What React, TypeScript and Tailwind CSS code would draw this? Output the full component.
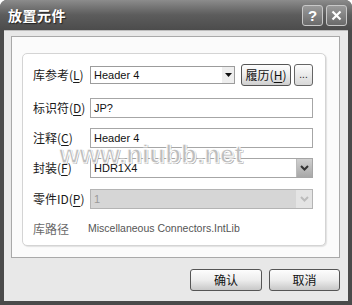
import React from "react";

const cjk = { fontFamily: '"SimSun","Noto Sans CJK SC","Liberation Sans",sans-serif' };
const lat = { fontFamily: '"Liberation Sans","Noto Sans CJK SC",sans-serif' };

function Label({ children, gray }: { children: React.ReactNode; gray?: boolean }) {
  return (
    <div className={`w-[57px] shrink-0 text-[12px] leading-none whitespace-nowrap ${gray ? "text-[#6a6a6a]" : "text-[#1a1a1a]"}`} style={cjk}>
      {children}
    </div>
  );
}

function U({ c }: { c: string }) {
  return (
    <>
      (<span className="underline underline-offset-[2px]">{c}</span>)
    </>
  );
}

function Chevron({ color }: { color: string }) {
  return (
    <svg width="9" height="6" viewBox="0 0 9 6">
      <path d="M1 1 L4.5 4.5 L8 1" stroke={color} strokeWidth="2" fill="none" />
    </svg>
  );
}

export default function App() {
  return (
    <div className="w-[352px] h-[305px] bg-[#4a4a4a] rounded-t-[7px] flex flex-col overflow-hidden relative">
      {/* title bar */}
      <div className="h-[30px] shrink-0 flex items-center justify-between pl-[8px] pr-[5px] bg-gradient-to-b from-[#8c8c8c] via-[#5c5c5c] to-[#4c4c4c]">
        <div className="text-white text-[14px] font-bold tracking-[0.5px] [text-shadow:1px_1px_1px_#222]" style={cjk}>
          放置元件
        </div>
        <div className="flex gap-[3px] mt-[1px]">
          <div className="w-[21px] h-[21px] rounded-[3px] border border-[#c8c8c8] bg-gradient-to-b from-[#9a9a9a] to-[#6a6a6a] flex items-center justify-center text-white text-[15px] font-bold leading-none" style={lat}>
            ?
          </div>
          <div className="w-[21px] h-[21px] rounded-[3px] border border-[#c8c8c8] bg-gradient-to-b from-[#9a9a9a] to-[#6a6a6a] flex items-center justify-center">
            <svg width="11" height="11" viewBox="0 0 11 11">
              <path d="M1.5 1.5 L9.5 9.5 M9.5 1.5 L1.5 9.5" stroke="white" strokeWidth="2.2" />
            </svg>
          </div>
        </div>
      </div>
      {/* body */}
      <div className="flex-1 mx-[4px] mb-[4px] bg-[#e8e8e8] border-t border-[#bdbdbd] pt-[5px] pl-[7px] pr-[8px] flex flex-col">
        <div className="h-[222px] bg-[#fbfbfb] border border-[#a9a9a9] pt-[16px] pl-[10px] pr-[13px]">
          <div className="h-[193px] bg-white border border-[#d4d4d4] rounded-[5px] shadow-[1px_1px_1px_#e2e2e2] pt-[10px] pl-[10px] pr-[11px] flex flex-col">
            {/* row 1 */}
            <div className="h-[22px] flex items-center">
              <Label>库参考<U c="L" /></Label>
              <div className="w-[145px] h-[18px] border border-[#9c9c9c] bg-white flex items-center justify-between text-[11px] text-[#111]" style={lat}>
                <span className="pl-[3px]">Header 4</span>
                <div className="w-[12px] h-[16px] bg-[#eeeeee] flex items-center justify-center">
                  <svg width="7" height="4" viewBox="0 0 7 4"><path d="M0 0 H7 L3.5 4 Z" fill="#111" /></svg>
                </div>
              </div>
              <div className="ml-[6px] w-[50px] h-[22px] rounded-[3px] border border-[#555] bg-gradient-to-b from-[#fdfdfd] via-[#ececec] to-[#cfcfcf] flex items-center justify-center text-[12px] text-[#111]" style={cjk}>
                履历<U c="H" />
              </div>
              <div className="ml-[3px] w-[19px] h-[22px] rounded-[3px] border border-[#666] bg-gradient-to-b from-[#fdfdfd] to-[#d8d8d8] flex items-end justify-center pb-[5px] text-[10px] leading-none text-[#222]" style={lat}>
                ...
              </div>
            </div>
            {/* row 2 */}
            <div className="mt-[12px] h-[20px] flex items-center">
              <Label>标识符<U c="D" /></Label>
              <div className="w-[223px] h-[20px] border border-[#a6a6a6] bg-white flex items-center pl-[3px] text-[11px] text-[#111]" style={lat}>
                JP?
              </div>
            </div>
            {/* row 3 */}
            <div className="mt-[10px] h-[20px] flex items-center">
              <Label>注释<U c="C" /></Label>
              <div className="w-[223px] h-[20px] border border-[#a6a6a6] bg-white flex items-center pl-[3px] text-[11px] text-[#111]" style={lat}>
                Header 4
              </div>
            </div>
            {/* row 4 */}
            <div className="mt-[10px] h-[20px] flex items-center">
              <Label>封装<U c="F" /></Label>
              <div className="w-[223px] h-[20px] border border-[#a6a6a6] bg-white flex items-center justify-between pl-[3px] text-[11px] text-[#111]" style={lat}>
                <span>HDR1X4</span>
                <div className="w-[16px] h-[18px] bg-gradient-to-b from-[#d0d0d0] to-[#a8a8a8] border-l border-[#bbb] flex items-center justify-center">
                  <Chevron color="#333" />
                </div>
              </div>
            </div>
            {/* row 5 */}
            <div className="mt-[11px] h-[20px] flex items-center">
              <Label>零件ID<U c="P" /></Label>
              <div className="w-[223px] h-[20px] border border-[#b4b4b4] bg-[#d6d6d6] flex items-center justify-between pl-[3px] text-[11px] text-[#9a9a9a]" style={lat}>
                <span>1</span>
                <div className="w-[16px] h-[18px] bg-[#e4e4e4] flex items-center justify-center">
                  <Chevron color="#bcbcbc" />
                </div>
              </div>
            </div>
            {/* row 6 */}
            <div className="mt-[10px] h-[20px] flex items-center">
              <Label gray>库路径</Label>
              <div className="text-[10.5px] text-[#555] -ml-[2px]" style={lat}>
                Miscellaneous Connectors.IntLib
              </div>
            </div>
          </div>
        </div>
        {/* footer */}
        <div className="mt-[11px] flex justify-end gap-[7px] pr-[0px]">
          <div className="w-[72px] h-[22px] rounded-[3px] border border-[#555] bg-gradient-to-b from-[#fdfdfd] via-[#ededed] to-[#c8c8c8] flex items-center justify-center text-[12px] text-[#111]" style={cjk}>
            确认
          </div>
          <div className="w-[71px] h-[22px] rounded-[3px] border border-[#555] bg-gradient-to-b from-[#fdfdfd] via-[#ededed] to-[#c8c8c8] flex items-center justify-center text-[12px] text-[#111]" style={cjk}>
            取消
          </div>
        </div>
      </div>
      {/* watermark */}
      <div className="absolute left-[59px] top-[135px] text-[26px] font-bold text-[#c4c4c4]/80 [-webkit-text-stroke:1px_#ffffff] [text-shadow:1px_1px_0_#aaaaaa] pointer-events-none" style={lat}>
        www.niubb.net
      </div>
    </div>
  );
}
